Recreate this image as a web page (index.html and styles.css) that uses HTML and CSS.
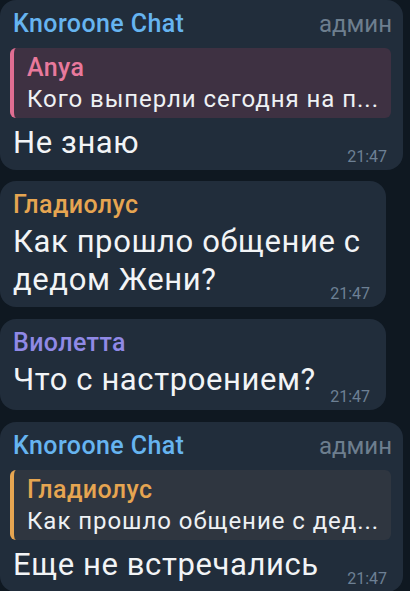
FILE: index.html
```html
<!DOCTYPE html>
<html lang="ru">
<head>
<meta charset="utf-8">
<link rel="stylesheet" href="styles.css">
</head>
<body>
<div class="chat">
  <div class="bubble wide">
    <div class="head"><span class="name blue">Knoroone Chat</span><span class="role">админ</span></div>
    <div class="reply pink">
      <div class="rname">Anya</div>
      <div class="rtext">Кого выперли сегодня на п...</div>
    </div>
    <div class="last"><span class="text">Не знаю</span><span class="time">21:47</span></div>
  </div>
  <div class="bubble narrow">
    <div class="head"><span class="name orange">Гладиолус</span></div>
    <div class="text">Как прошло общение с</div>
    <div class="last"><span class="text">дедом Жени?</span><span class="time">21:47</span></div>
  </div>
  <div class="bubble narrow">
    <div class="head"><span class="name violet">Виолетта</span></div>
    <div class="last low"><span class="text">Что с настроением?</span><span class="time">21:47</span></div>
  </div>
  <div class="bubble wide">
    <div class="head"><span class="name blue">Knoroone Chat</span><span class="role">админ</span></div>
    <div class="reply gray">
      <div class="rname">Гладиолус</div>
      <div class="rtext">Как прошло общение с дед...</div>
    </div>
    <div class="last"><span class="text">Еще не встречались</span><span class="time">21:47</span></div>
  </div>
</div>
</body>
</html>
```
FILE: styles.css
```css
html, body {
  margin: 0;
  padding: 0;
  background: #0f1821;
  font-family: Roboto, "Noto Sans", sans-serif;
  color: #f2f4f6;
  overflow: hidden;
}
.chat {
  display: flex;
  flex-direction: column;
  width: 410px;
  height: 591px;
}
.bubble {
  background: #212d3b;
  border-radius: 16px;
  padding: 10px 16px 5px 13px;
  box-sizing: border-box;
  flex-shrink: 0;
}
.bubble + .bubble { margin-top: 12px; }
.bubble:nth-child(2) { margin-top: 11px; }
.wide { width: 403px; }
.narrow { width: 386px; }
.head {
  display: flex;
  justify-content: space-between;
  align-items: baseline;
}
.name {
  font-size: 25px;
  line-height: 28px;
  font-weight: 500;
  letter-spacing: 0.4px;
}
.blue { color: #66b4f0; }
.orange { color: #e6a551; }
.violet { color: #9089e6; }
.role {
  font-size: 24px;
  line-height: 28px;
  color: #6d7e8e;
  margin-right: -5px;
}
.reply {
  margin: 10px -4px 0 -3px;
  border-radius: 6px;
  border-left: 4px solid;
  padding: 5px 8px 3px 13px;
}
.reply.pink { background: #3e3142; border-left-color: #e06e92; }
.reply.pink .rname { color: #e8799c; }
.reply.gray { background: #2f3640; border-left-color: #e6a551; }
.reply.gray .rname { color: #e6a551; }
.rname {
  font-size: 25px;
  line-height: 30px;
  font-weight: 500;
  letter-spacing: 0.4px;
}
.rtext {
  font-size: 24px;
  line-height: 32px;
  letter-spacing: 0.95px;
  white-space: nowrap;
  color: #eef1f4;
}
.text {
  font-size: 31px;
  line-height: 38px;
  letter-spacing: 0.6px;
}
.bubble > .text { margin-top: 4px; }
.last {
  display: flex;
  justify-content: space-between;
  align-items: flex-end;
  margin-top: 6px;
}
.bubble > .text + .last { margin-top: 0; }
.head + .last { margin-top: 4px; }
.last .text { margin-bottom: 3px; }
.last.low .text { margin-bottom: 6px; }
.time {
  font-size: 16px;
  line-height: 16px;
  color: #6d8094;
}
```
